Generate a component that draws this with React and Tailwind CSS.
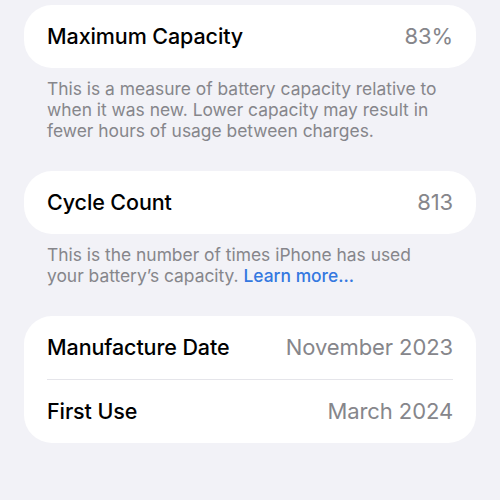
const font = { fontFamily: 'Inter, "Noto Sans", sans-serif' };

function Row({ label, value }) {
  return (
    <div className="flex h-[63px] items-center justify-between px-[23px]">
      <span className="text-[21.5px] font-medium tracking-[-0.1px] text-black">{label}</span>
      <span className="text-[22px] tracking-[-0.1px] text-[#86868b]">{value}</span>
    </div>
  );
}

export default function App() {
  return (
    <div className="h-[500px] w-[500px] overflow-hidden bg-[#f2f2f7] px-[24px] pt-[5px]" style={font}>
      <div className="rounded-[28px] bg-white">
        <Row label="Maximum Capacity" value="83%" />
      </div>
      <p className="px-[23px] pt-[10px] pb-[30px] text-[17.4px] leading-[21px] text-[#86868b]">
        This is a measure of battery capacity relative to when it was new. Lower capacity may
        result in fewer hours of usage between charges.
      </p>

      <div className="rounded-[28px] bg-white">
        <Row label="Cycle Count" value="813" />
      </div>
      <p className="px-[23px] pt-[10px] pb-[30px] text-[17.4px] leading-[21px] text-[#86868b]">
        This is the number of times iPhone has used
        <br />
        your battery’s capacity. <span className="font-medium text-[#3478e0]">Learn more...</span>
      </p>

      <div className="rounded-[28px] bg-white">
        <Row label="Manufacture Date" value="November 2023" />
        <div className="mx-[23px] h-px bg-[#e5e5ea]" />
        <Row label="First Use" value="March 2024" />
      </div>
    </div>
  );
}
